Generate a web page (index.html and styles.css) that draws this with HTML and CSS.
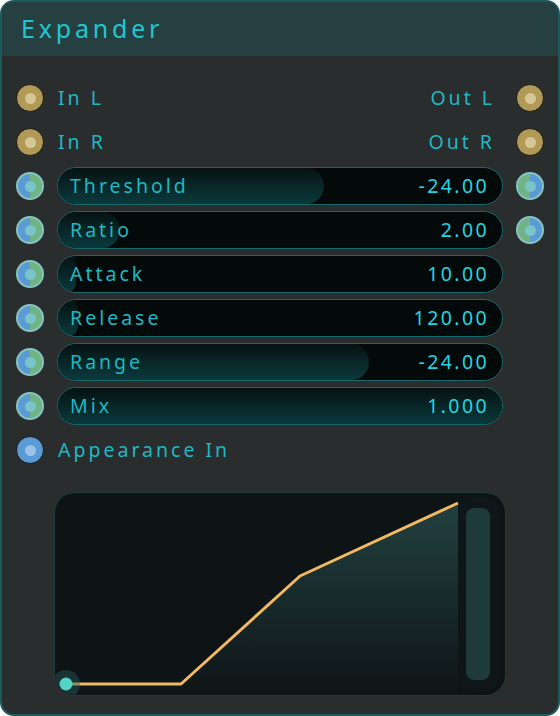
FILE: index.html
```html
<!DOCTYPE html>
<html>
<head>
<meta charset="utf-8">
<link rel="stylesheet" href="styles.css">
</head>
<body>
<div class="node">
  <div class="header">Expander</div>
  <div class="body">
    <div class="row">
      <span class="sock gold"></span>
      <span class="plabel">In L</span>
      <span class="plabel right">Out L</span>
      <span class="sock gold"></span>
    </div>
    <div class="row">
      <span class="sock gold"></span>
      <span class="plabel">In R</span>
      <span class="plabel right">Out R</span>
      <span class="sock gold"></span>
    </div>
    <div class="row">
      <span class="sock split"></span>
      <div class="slider"><div class="fill" style="width:60%"></div><span class="name">Threshold</span><span class="val">-24.00</span></div>
      <span class="sock split flip"></span>
    </div>
    <div class="row">
      <span class="sock split"></span>
      <div class="slider"><div class="fill" style="width:14%"></div><span class="name">Ratio</span><span class="val">2.00</span></div>
      <span class="sock split flip"></span>
    </div>
    <div class="row">
      <span class="sock split"></span>
      <div class="slider"><div class="fill" style="width:4%"></div><span class="name">Attack</span><span class="val">10.00</span></div>
      <span class="sock none"></span>
    </div>
    <div class="row">
      <span class="sock split"></span>
      <div class="slider"><div class="fill" style="width:4.5%"></div><span class="name">Release</span><span class="val">120.00</span></div>
      <span class="sock none"></span>
    </div>
    <div class="row">
      <span class="sock split"></span>
      <div class="slider"><div class="fill" style="width:70%"></div><span class="name">Range</span><span class="val">-24.00</span></div>
      <span class="sock none"></span>
    </div>
    <div class="row">
      <span class="sock split"></span>
      <div class="slider"><div class="fill" style="width:100%"></div><span class="name">Mix</span><span class="val">1.000</span></div>
      <span class="sock none"></span>
    </div>
    <div class="row">
      <span class="sock blue"></span>
      <span class="plabel">Appearance In</span>
    </div>
    <div class="graph">
      <svg width="450" height="202" viewBox="0 0 450 202">
        <defs>
          <linearGradient id="area" x1="0" y1="0" x2="0" y2="1">
            <stop offset="0" stop-color="#21403f"/>
            <stop offset="1" stop-color="#0f1517"/>
          </linearGradient>
          <clipPath id="clip"><rect x="0" y="0" width="450" height="202" rx="20"/></clipPath>
        </defs>
        <g clip-path="url(#clip)">
          <polygon points="11,191 126,191 245,83 403,10 403,202 11,202" fill="url(#area)"/>
          <rect x="403" y="4" width="40" height="194" rx="12" fill="#0f1618"/>
          <rect x="411" y="15" width="24" height="172" rx="8" fill="#1f3a3a"/>
          <polyline points="11,191 126,191 245,83 403,10" fill="none" stroke="#f1b964" stroke-width="3" stroke-linejoin="round"/>
          <circle cx="11" cy="191" r="14" fill="#2a5a5a" fill-opacity="0.45"/>
          <circle cx="11" cy="191" r="6.5" fill="#52d5c6"/>
        </g>
      </svg>
    </div>
  </div>
</div>
</body>
</html>
```
FILE: styles.css
```css
html, body {
  margin: 0;
  padding: 0;
  background: #ffffff;
}
body {
  font-family: "Noto Sans", "DejaVu Sans", sans-serif;
}
.node {
  width: 560px;
  height: 716px;
  box-sizing: border-box;
  border: 2px solid #1d5a5c;
  border-radius: 14px;
  background: #2a2d2e;
  overflow: hidden;
  display: flex;
  flex-direction: column;
}
.header {
  height: 54px;
  flex: none;
  background: #264042;
  color: #1ec7d0;
  font-size: 25px;
  letter-spacing: 3.8px;
  padding-left: 19px;
  line-height: 52px;
  box-sizing: border-box;
}
.body {
  padding: 20px 14px 0 14px;
  display: flex;
  flex-direction: column;
}
.row {
  height: 44px;
  display: flex;
  align-items: center;
  gap: 13px;
}
.sock {
  width: 28px;
  height: 28px;
  border-radius: 50%;
  box-sizing: border-box;
  flex: none;
  position: relative;
}
.sock::after {
  content: "";
  position: absolute;
  left: 50%;
  top: 50%;
  width: 11px;
  height: 11px;
  margin: -5.5px 0 0 -5.5px;
  border-radius: 50%;
}
.sock.gold {
  background: #b09a55;
  border: 1px solid #1b1b1b;
}
.sock.gold::after { background: #d6c797; }
.sock.split {
  background: linear-gradient(90deg, #5a9bd6 50%, #70b485 50%);
  border: 2px solid #86c3c0;
}
.sock.split.flip {
  background: linear-gradient(90deg, #70b485 50%, #5a9bd6 50%);
}
.sock.split::after { background: #78c4c8; }
.sock.blue {
  background: #5a9bd6;
  border: 1px solid #1b1b1b;
}
.sock.blue::after { background: #9cc4e9; }
.sock.none { visibility: hidden; }
.plabel {
  color: #1eb8c2;
  font-size: 19.5px;
  letter-spacing: 3px;
  flex: 1;
  padding-left: 1px;
  padding-bottom: 2px;
}
.plabel.right {
  text-align: right;
  padding-right: 8px;
}
.slider {
  flex: 1;
  height: 38px;
  box-sizing: border-box;
  border: 1px solid #17686b;
  border-radius: 19px;
  background: #040909;
  position: relative;
  overflow: hidden;
  display: flex;
  align-items: center;
  justify-content: space-between;
  padding: 0 13px 2px 12px;
}
.fill {
  position: absolute;
  left: 0;
  top: 0;
  bottom: 0;
  border-radius: 19px;
  background: linear-gradient(180deg, #061212 0%, #0b3a3c 100%);
}
.name, .val {
  position: relative;
  font-size: 19.5px;
  letter-spacing: 3px;
}
.name { color: #1eb8c2; }
.val { color: #20d6e2; letter-spacing: 2.4px; }
.graph {
  margin: 21px 0 0 39px;
  width: 450px;
  height: 202px;
  box-sizing: border-box;
  border-radius: 20px;
  background: #0e1315;
  box-shadow: 0 0 0 1px #1d3a3c;
  overflow: hidden;
}
.graph svg { display: block; }
```
